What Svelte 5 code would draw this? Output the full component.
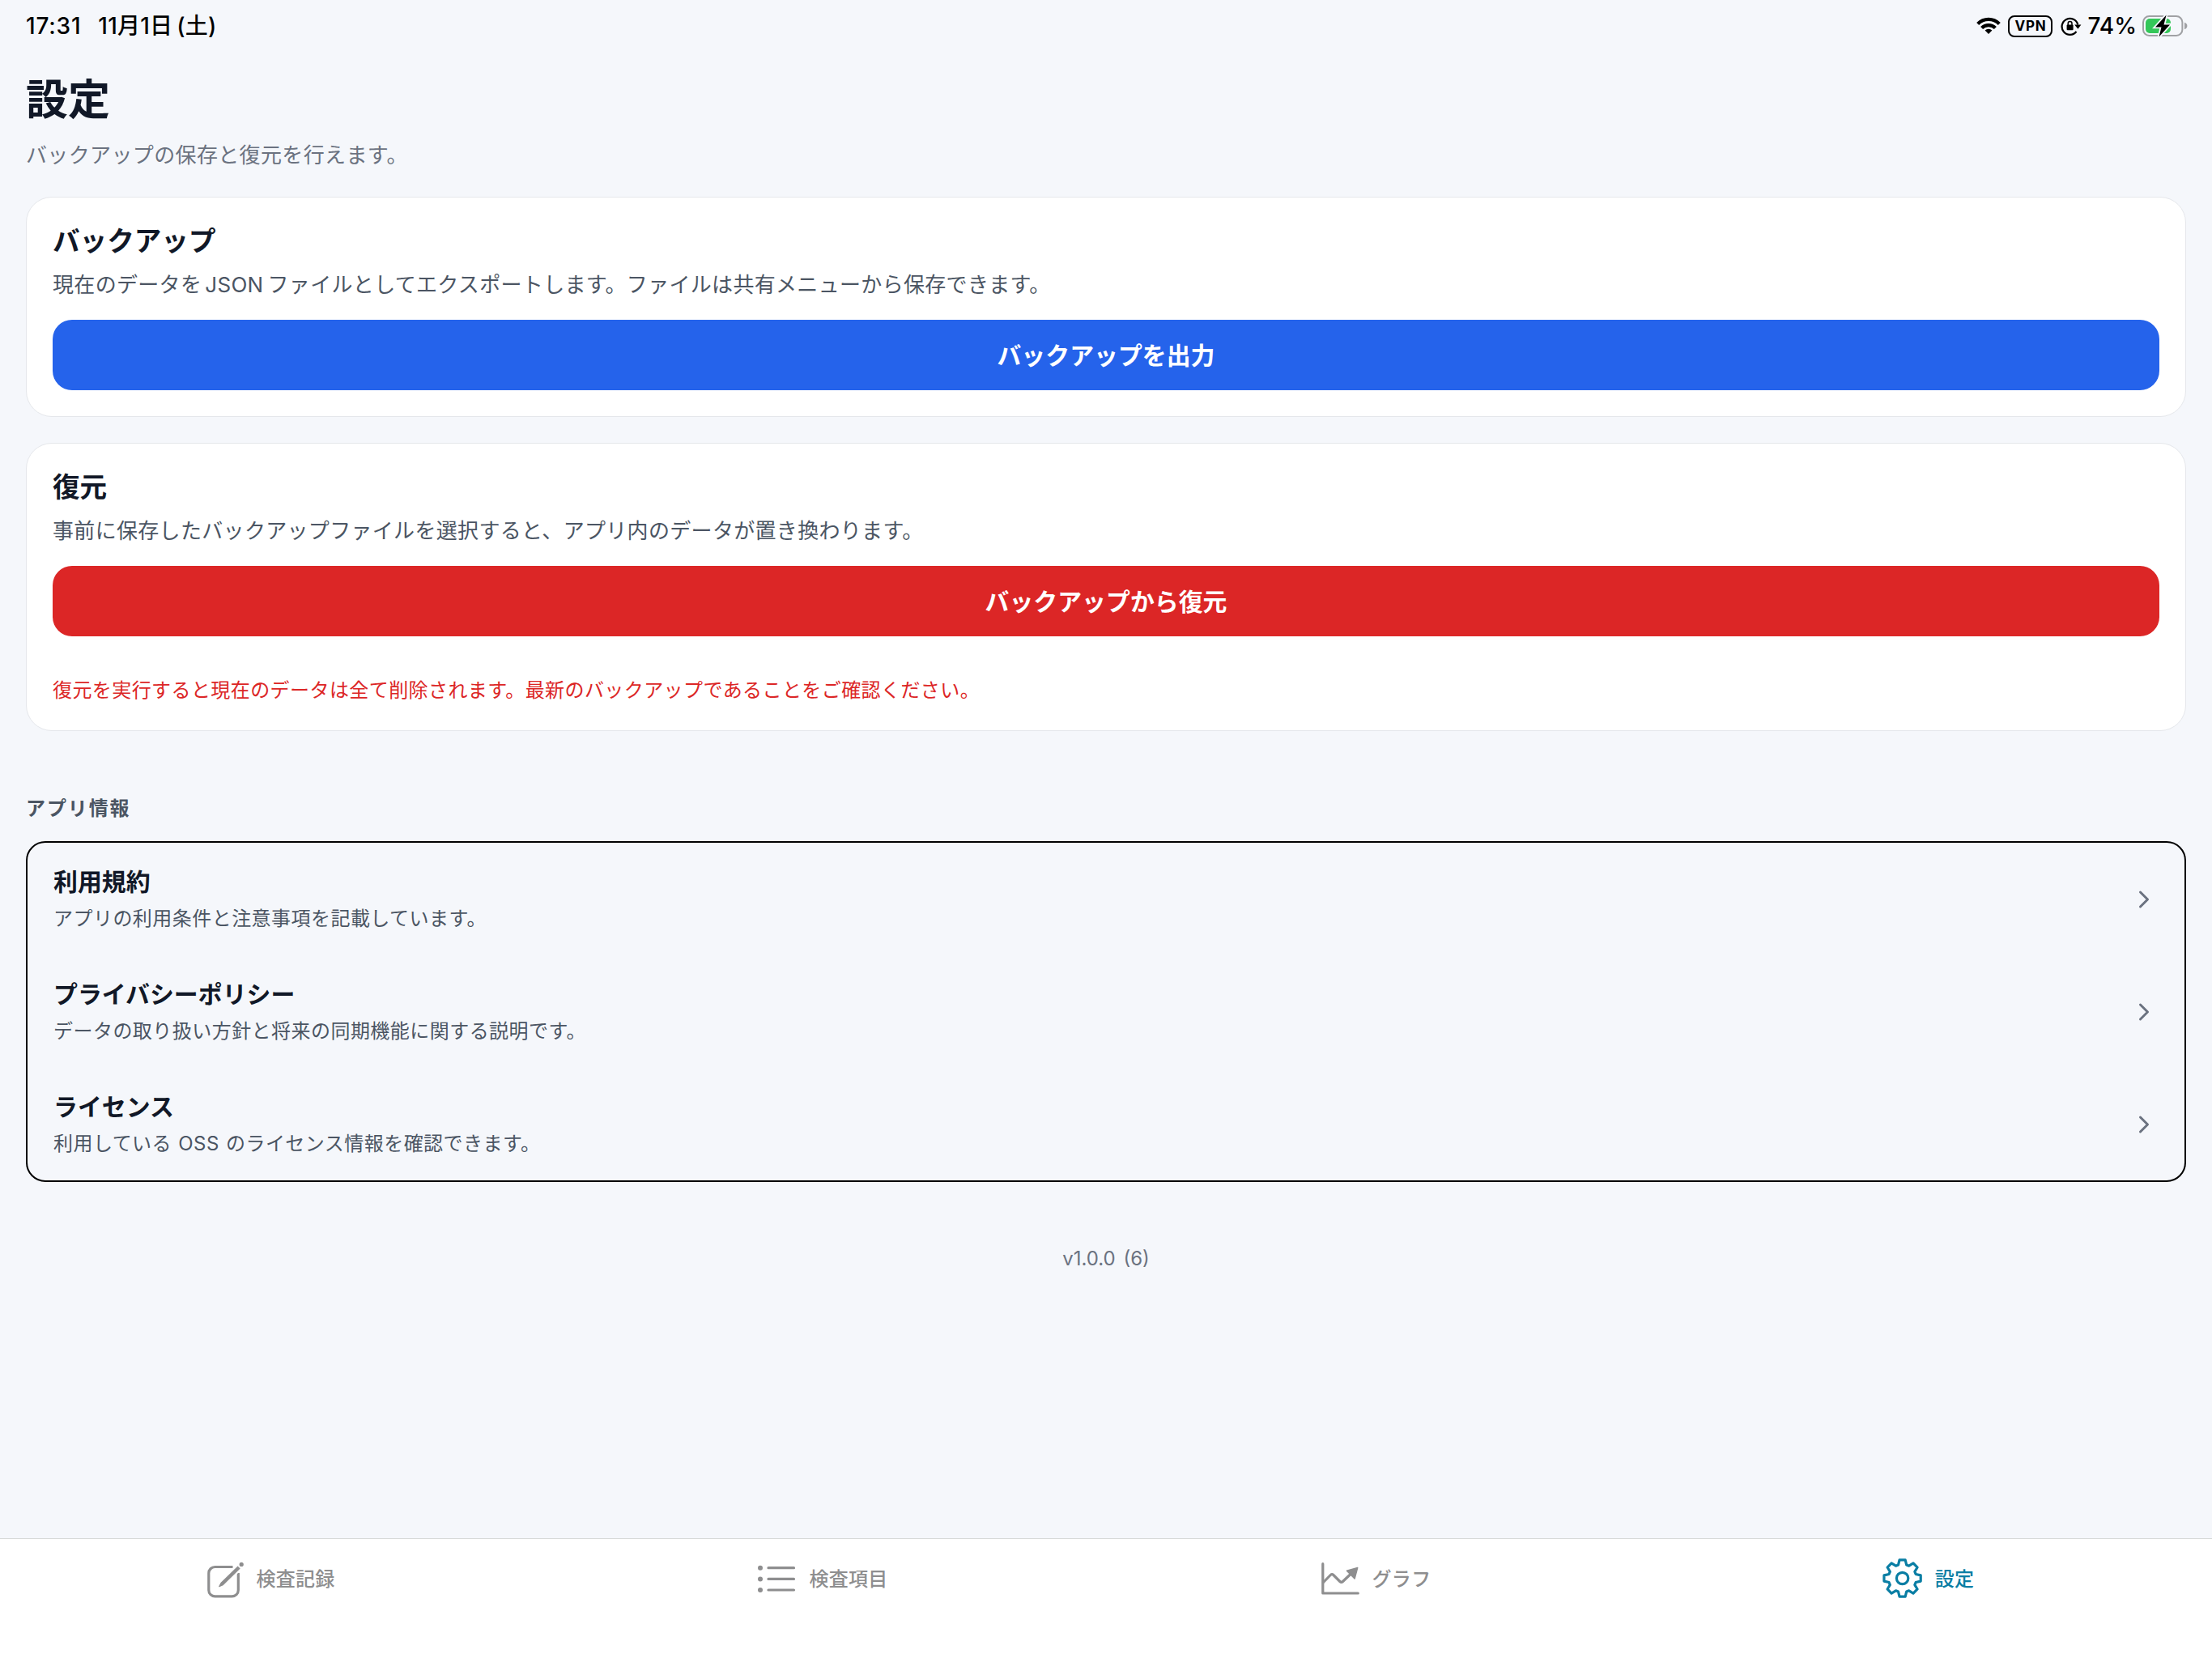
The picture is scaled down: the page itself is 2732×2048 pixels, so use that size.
<script lang="ts">
	interface InfoLink {
		title: string;
		description: string;
	}

	interface Tab {
		icon: string;
		label: string;
	}

	const links: InfoLink[] = [
		{ title: '利用規約', description: 'アプリの利用条件と注意事項を記載しています。' },
		{ title: 'プライバシーポリシー', description: 'データの取り扱い方針と将来の同期機能に関する説明です。' },
		{ title: 'ライセンス', description: '利用している OSS のライセンス情報を確認できます。' }
	];

	const tabs: Tab[] = [
		{ icon: 'edit', label: '検査記録' },
		{ icon: 'list', label: '検査項目' },
		{ icon: 'chart', label: 'グラフ' },
		{ icon: 'gear', label: '設定' }
	];

	let activeTab = $state('gear');

	// 歯車の輪郭（8枚歯）
	function gearPath(cx: number, cy: number) {
		const points: string[] = [];
		for (let i = 0; i < 8; i++) {
			for (const [r, offset] of [[17.3, -17], [22.9, -9], [22.9, 9], [17.3, 17]]) {
				const a = ((i * 45 + offset - 90) * Math.PI) / 180;
				points.push(`${(cx + r * Math.cos(a)).toFixed(2)} ${(cy + r * Math.sin(a)).toFixed(2)}`);
			}
		}
		return `M${points.join('L')}Z`;
	}
</script>

<div class="screen">
	<!-- ステータスバー -->
	<div class="status-bar">
		<div class="clock">
			<span class="time">17:31</span>
			<span class="date">11月1日<span class="weekday">(土)</span></span>
		</div>
		<div class="indicators">
			<svg class="wifi" width="30" height="22" viewBox="0 0 30 22" fill="none" stroke="#000" stroke-width="4.2">
				<path d="M1.7 8.4a18.8 18.8 0 0 1 26.6 0" />
				<path d="M6.6 13.6a11.9 11.9 0 0 1 16.8 0" />
				<path d="M15 21l-4.4-4.4a6.2 6.2 0 0 1 8.8 0z" fill="#000" stroke="none" />
			</svg>
			<span class="vpn">VPN</span>
			<svg class="lock" width="26" height="24" viewBox="0 0 26 24" fill="none" stroke="#000" stroke-width="2.2">
				<path d="M19.5 19a10 10 0 1 1 1.8-8.6" />
				<path d="M17.2 10.5h8.2l-4 5.2z" fill="#000" stroke="none" />
				<rect x="7.6" y="10.6" width="8" height="6.6" rx="1" fill="#000" stroke="none" />
				<path d="M9.2 11V8.9a2.4 2.4 0 0 1 4.8 0V11" stroke-width="1.5" />
			</svg>
			<span class="percent">74%</span>
			<svg class="battery" width="56" height="30" viewBox="0 0 56 30">
				<rect x="1" y="3" width="48.4" height="24" rx="7.5" fill="none" stroke="#a0a1a4" stroke-width="2" />
				<path d="M52 10.8c2.4.6 3.4 2.4 3.4 4.2s-1 3.6-3.4 4.2z" fill="#a0a1a4" />
				<rect x="4" y="6" width="31" height="18" rx="5" fill="#34c759" />
				<path d="M29.6 1.5L16 16.5h7.5L20.5 28.5L34 13.5h-7.5z" fill="#000" stroke="#f5f7fb" stroke-width="3.5" paint-order="stroke" />
			</svg>
		</div>
	</div>

	<main>
		<h1>設定</h1>
		<p class="lead">バックアップの保存と復元を行えます。</p>

		<section class="card">
			<h2>バックアップ</h2>
			<p class="text">現在のデータを<span class="latin">JSON</span>ファイルとしてエクスポートします。ファイルは共有メニューから保存できます。</p>
			<button class="action primary">バックアップを出力</button>
		</section>

		<section class="card">
			<h2>復元</h2>
			<p class="text">事前に保存したバックアップファイルを選択すると、アプリ内のデータが置き換わります。</p>
			<button class="action danger">バックアップから復元</button>
			<p class="warning">復元を実行すると現在のデータは全て削除されます。最新のバックアップであることをご確認ください。</p>
		</section>

		<h3>アプリ情報</h3>
		<div class="links">
			{#each links as link}
				<button class="link">
					<span class="link-body">
						<span class="link-title">{link.title}</span>
						<span class="link-text">{link.description}</span>
					</span>
					<svg width="32" height="32" viewBox="0 0 512 512" fill="none" stroke="#6b7280" stroke-width="48" stroke-linecap="round" stroke-linejoin="round">
						<path d="M184 112l144 144-144 144" />
					</svg>
				</button>
			{/each}
		</div>

		<p class="version">v1.0.0 (6)</p>
	</main>

	<!-- タブバー -->
	<nav>
		{#each tabs as tab}
			<button class="tab" class:active={tab.icon === activeTab} onclick={() => (activeTab = tab.icon)}>
				<svg width="50" height="50" viewBox="0 0 50 50" fill="none" stroke="currentColor" stroke-width="3.2" stroke-linecap="round" stroke-linejoin="round">
					{#if tab.icon === 'edit'}
						<path d="M36.5 10.5H14.5a7.7 7.7 0 0 0-7.7 7.7V39.2a7.7 7.7 0 0 0 7.7 7.7H35.6a7.7 7.7 0 0 0 7.7-7.7V18" stroke-linecap="butt" />
						<path d="M42.6 9.4l3.1 3.1L24.6 33.2l-4.6 2.1a.6.6 0 0 1-.8-.8l2.3-4.5z" fill="currentColor" stroke="#fff" stroke-width="4" paint-order="stroke" />
						<circle cx="47.2" cy="7.4" r="2.6" fill="currentColor" stroke="none" />
					{:else if tab.icon === 'list'}
						<g fill="currentColor" stroke="none">
							<circle cx="5" cy="11.7" r="3" />
							<circle cx="5" cy="25.4" r="3" />
							<circle cx="5" cy="39" r="3" />
						</g>
						<path d="M15 11.7h31.5M15 25.4h31.5M15 39h31.5" />
					{:else if tab.icon === 'chart'}
						<path d="M3.8 6.7V43h43.5" />
						<path d="M4.5 29.5l8.8-9q1.8-1.8 3.6 0l8 8q1.8 1.8 3.6 0L39 18.5" />
						<path d="M46.7 11.5l-3.6 13.6-9.7-9.9z" fill="currentColor" stroke-width="1.5" />
					{:else}
						<path d={gearPath(24.6, 24.5)} />
						<circle cx="24.6" cy="24.5" r="7.2" />
					{/if}
				</svg>
				<span class="tab-label">{tab.label}</span>
			</button>
		{/each}
	</nav>
</div>

<style>
	:global(body) {
		background-color: #f5f7fb;
	}

	.screen {
		display: flex;
		flex-direction: column;
		height: 100vh;
		background-color: #f5f7fb;
		color: #111827;
		font-family: Inter, 'Noto Sans CJK JP', sans-serif;
	}

	h1,
	h2,
	h3,
	p {
		margin: 0;
	}

	button {
		border: none;
		background: none;
		padding: 0;
		font: inherit;
		color: inherit;
		cursor: pointer;
	}

	svg {
		flex-shrink: 0;
	}

	.status-bar {
		display: flex;
		justify-content: space-between;
		align-items: center;
		height: 64px;
		padding: 0 30px 0 32px;
		color: #000;
		font-size: 28px;
		font-weight: 500;
		line-height: 36px;
	}

	.clock {
		display: flex;
		gap: 21px;
		letter-spacing: 0.2px;
	}

	.time {
		letter-spacing: 0.8px;
	}

	.weekday {
		margin-left: 5px;
	}

	.indicators {
		display: flex;
		align-items: center;
	}

	.vpn {
		box-sizing: border-box;
		width: 55px;
		height: 27px;
		margin: 0 10px 0 9px;
		border: 2.5px solid #000;
		border-radius: 8px;
		font-size: 17px;
		font-weight: 700;
		line-height: 22px;
		letter-spacing: 0.8px;
		text-align: center;
	}

	.percent {
		margin: 0 7px;
	}

	main {
		flex: 1;
		padding: 26px 32px 0;
	}

	h1 {
		font-size: 52px;
		font-weight: 700;
		line-height: 68px;
	}

	.lead {
		margin-top: 16px;
		color: #6b7280;
		font-size: 26px;
		line-height: 36px;
		letter-spacing: 0.36px;
	}

	.card {
		margin-top: 33px;
		padding: 32px;
		background-color: #fff;
		border: 1px solid #e5e7eb;
		border-radius: 32px;
	}

	.card + .card {
		margin-top: 32px;
	}

	h2 {
		font-size: 33.6px;
		font-weight: 700;
		line-height: 44px;
	}

	.text {
		margin: 12px 0 23px;
		color: #4b5563;
		font-size: 26px;
		line-height: 40px;
		letter-spacing: 0.32px;
	}

	.latin {
		margin: 0 5px 0 4px;
	}

	.action {
		display: block;
		width: 100%;
		height: 87px;
		padding-bottom: 4px;
		border-radius: 24px;
		color: #fff;
		font-size: 29.9px;
		font-weight: 600;
	}

	.primary {
		background-color: #2563eb;
	}

	.danger {
		background-color: #dc2626;
	}

	.warning {
		margin-top: 50px;
		color: #dc2626;
		font-size: 24px;
		line-height: 34px;
		letter-spacing: 0.42px;
	}

	h3 {
		margin-top: 80px;
		color: #4b5563;
		font-size: 24px;
		font-weight: 600;
		line-height: 32px;
		letter-spacing: 1.9px;
	}

	.links {
		margin-top: 24px;
		border: 2px solid #000;
		border-radius: 24px;
	}

	.link {
		display: flex;
		align-items: center;
		justify-content: space-between;
		width: 100%;
		height: 139px;
		padding: 0 34px 0 32px;
		text-align: left;
	}

	.link-body {
		display: flex;
		flex-direction: column;
		gap: 8px;
		padding-top: 1px;
	}

	.link-title {
		font-size: 29.9px;
		font-weight: 600;
		line-height: 39px;
	}

	.link-text {
		color: #4b5563;
		font-size: 24px;
		line-height: 36px;
		letter-spacing: 0.46px;
		word-spacing: 1px;
	}

	.version {
		margin-top: 79px;
		color: #6b7280;
		font-size: 24px;
		line-height: 32px;
		text-align: center;
		word-spacing: 3px;
	}

	nav {
		display: grid;
		grid-template-columns: repeat(4, 1fr);
		height: 98px;
		padding-bottom: 49px;
		background-color: #fff;
		border-top: 1px solid #d8dad8;
	}

	.tab {
		display: flex;
		align-items: center;
		justify-content: center;
		gap: 15px;
		padding-right: 18px;
		color: #8e8e8f;
		font-size: 24px;
		font-weight: 500;
		letter-spacing: 0.3px;
	}

	.tab.active {
		color: #0a7ea4;
	}

	.tab-label {
		padding-bottom: 3px;
	}
</style>
